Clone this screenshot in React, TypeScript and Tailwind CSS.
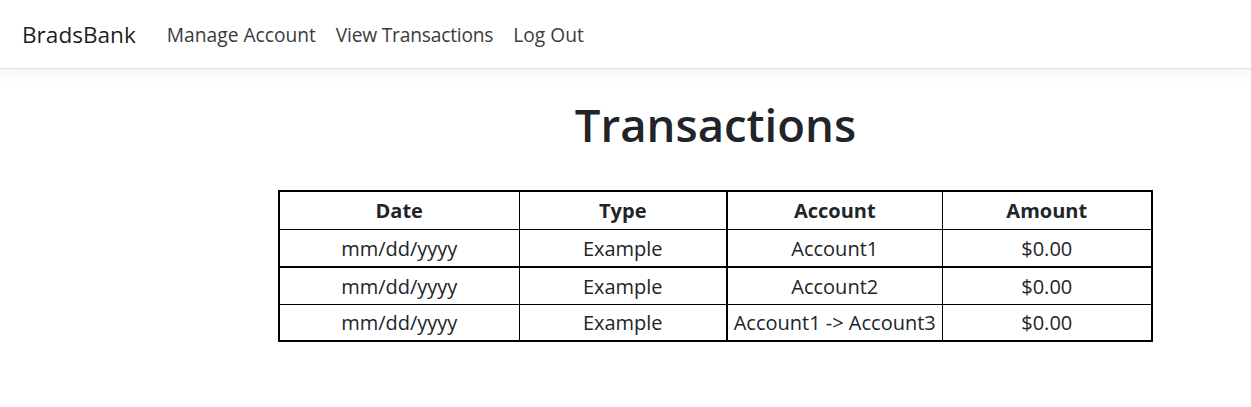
const rows = [
  { date: "mm/dd/yyyy", type: "Example", account: "Account1", amount: "$0.00" },
  { date: "mm/dd/yyyy", type: "Example", account: "Account2", amount: "$0.00" },
  { date: "mm/dd/yyyy", type: "Example", account: "Account1 -> Account3", amount: "$0.00" },
];

export default function App() {
  return (
    <div className="min-h-[407px] bg-white text-[#212529] font-['Open_Sans',sans-serif]">
      {/* Navbar */}
      <nav className="flex items-center h-[69px] pl-[22px] pt-[2px] border-b border-[#e3e3e3] shadow-[0_5px_15px_rgba(0,0,0,0.05)]">
        <span className="text-[22.6px] text-black/90 mr-[21px]">BradsBank</span>
        <ul className="flex items-center">
          <li className="px-[10px] text-[19.2px] text-[#3b3b3b]">Manage Account</li>
          <li className="px-[10px] text-[19.2px] text-[#3b3b3b] tracking-[-0.2px]">View Transactions</li>
          <li className="px-[10px] text-[19.2px] text-[#3b3b3b]">Log Out</li>
        </ul>
      </nav>

      {/* Content */}
      <main className="ml-[278px] w-[875px] pt-[25px]">
        <h1 className="text-center text-[45.5px] font-semibold leading-[60px] mb-[36px]">Transactions</h1>
        <table className="w-full border-collapse text-center text-[20px] border-2 border-black">
          <thead>
            <tr className="h-[38px] border-b border-black">
              <th className="w-[240px] pt-[2px] border-r border-black font-bold">Date</th>
              <th className="w-[208px] pt-[2px] border-r-2 border-black font-bold">Type</th>
              <th className="w-[215px] pt-[2px] border-r border-black font-bold">Account</th>
              <th className="pt-[2px] font-bold">Amount</th>
            </tr>
          </thead>
          <tbody>
            {rows.map((r, i) => (
              <tr key={i} className={i === 0 ? "h-[38px] border-b-2 border-black" : "h-[37px] border-b border-black"}>
                <td className="pt-[2px] border-r border-black">{r.date}</td>
                <td className="pt-[2px] border-r-2 border-black">{r.type}</td>
                <td className="pt-[2px] border-r border-black">{r.account}</td>
                <td className="pt-[2px]">{r.amount}</td>
              </tr>
            ))}
          </tbody>
        </table>
      </main>
    </div>
  );
}
